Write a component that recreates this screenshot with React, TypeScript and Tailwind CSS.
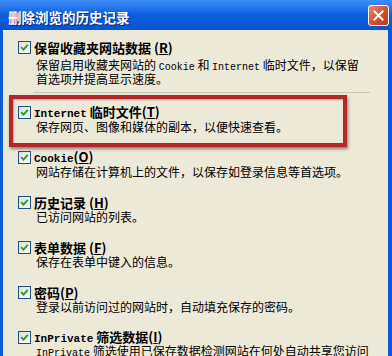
import React from "react";

const M = ({ children, bold }: { children: React.ReactNode; bold?: boolean }) => (
  <span
    className={
      bold
        ? "font-['Liberation_Mono'] text-[11px] leading-[13px] font-bold"
        : "font-['Liberation_Mono'] text-[10px] leading-[13px]"
    }
  >
    {children}
  </span>
);

const U = ({ children }: { children: React.ReactNode }) => (
  <span className="underline underline-offset-[1px]">{children}</span>
);

const Check = () => (
  <div className="w-[13px] h-[13px] shrink-0 border border-[#1c5180] bg-gradient-to-br from-[#dcdcd7] to-white flex items-center justify-center">
    <svg width="9" height="9" viewBox="0 0 9 9">
      <path d="M1.2 4.2 L3.5 6.6 L7.8 1.8" stroke="#21a121" strokeWidth="1.9" fill="none" />
    </svg>
  </div>
);

const Line = ({ children }: { children: React.ReactNode }) => (
  <div className="h-[13px] flex items-center whitespace-nowrap text-[12px] leading-[13px] text-black">
    <span>{children}</span>
  </div>
);

const Item = ({
  label,
  lines,
  gap = "mt-[1px]",
  className = "",
}: {
  label: React.ReactNode;
  lines: React.ReactNode[];
  gap?: string;
  className?: string;
}) => (
  <div className={"flex flex-col " + className}>
    <div className="flex items-center h-[13px] gap-[3px]">
      <Check />
      <span className="font-bold text-[13px] leading-[13px] whitespace-nowrap text-black">{label}</span>
    </div>
    <div className={"ml-[18px] flex flex-col " + gap}>
      {lines.map((l, i) => (
        <Line key={i}>{l}</Line>
      ))}
    </div>
  </div>
);

export default function App() {
  return (
    <div className="w-[392px] h-[356px] overflow-hidden flex flex-col bg-[#0b5bd5] font-['Noto_Sans_CJK_SC',sans-serif]">
      <div className="h-[30px] shrink-0 flex items-center justify-between pl-[8px] pr-[3px] bg-gradient-to-b from-[#3d8ef8] via-[#0b5edf] to-[#0853cc]">
        <span className="mt-[3px] text-white font-bold text-[13.5px] leading-[16px] [text-shadow:1px_1px_0_#0a2a7a]">
          删除浏览的历史记录
        </span>
        <div className="w-[21px] h-[21px] rounded-[3px] border border-white bg-gradient-to-br from-[#ec8a6c] via-[#d9512f] to-[#bf3a1c] flex items-center justify-center">
          <svg width="11" height="11" viewBox="0 0 11 11">
            <path d="M1.5 1.5 L9.5 9.5 M9.5 1.5 L1.5 9.5" stroke="white" strokeWidth="2" strokeLinecap="square" />
          </svg>
        </div>
      </div>
      <div className="flex-1 ml-[3px] mr-[4px] bg-[#ece9d8] relative pl-[15px] pt-[11px] overflow-hidden">
        <Item
          label={
            <>
              保留收藏夹网站数据 (<U>R</U>)
            </>
          }
          gap="mt-[5px]"
          lines={[
            <>
              保留启用收藏夹网站的 <M>Cookie</M> 和 <M>Internet</M> 临时文件，以保留
            </>,
            <>首选项并提高显示速度。</>,
          ]}
        />
        <div className="mt-[7px] ml-[15px] w-[337px] h-[1px] bg-[#c9c6b6]" />
        <Item
          className="mt-[13px]"
          label={
            <>
              <M bold>Internet</M> 临时文件(<U>T</U>)
            </>
          }
          lines={[<>保存网页、图像和媒体的副本，以便快速查看。</>]}
        />
        <Item
          className="mt-[18px]"
          label={
            <>
              <M bold>Cookie</M>(<U>O</U>)
            </>
          }
          lines={[<>网站存储在计算机上的文件，以保存如登录信息等首选项。</>]}
        />
        <Item
          className="mt-[18px]"
          label={
            <>
              历史记录 (<U>H</U>)
            </>
          }
          lines={[<>已访问网站的列表。</>]}
        />
        <Item
          className="mt-[18px]"
          label={
            <>
              表单数据 (<U>F</U>)
            </>
          }
          lines={[<>保存在表单中键入的信息。</>]}
        />
        <Item
          className="mt-[18px]"
          label={
            <>
              密码(<U>P</U>)
            </>
          }
          lines={[<>登录以前访问过的网站时，自动填充保存的密码。</>]}
        />
        <Item
          className="mt-[18px]"
          label={
            <>
              <M bold>InPrivate</M> 筛选数据(<U>I</U>)
            </>
          }
          lines={[
            <>
              <M>InPrivate</M> 筛选使用已保存数据检测网站在何处自动共享您访问
            </>,
          ]}
        />
        <div className="absolute left-[6px] top-[65px] w-[338px] h-[52px] border-[4px] border-[#b3272b] shadow-[1px_2px_3px_rgba(0,0,0,0.45),inset_1px_1px_2px_rgba(0,0,0,0.3)] pointer-events-none" />
      </div>
    </div>
  );
}
